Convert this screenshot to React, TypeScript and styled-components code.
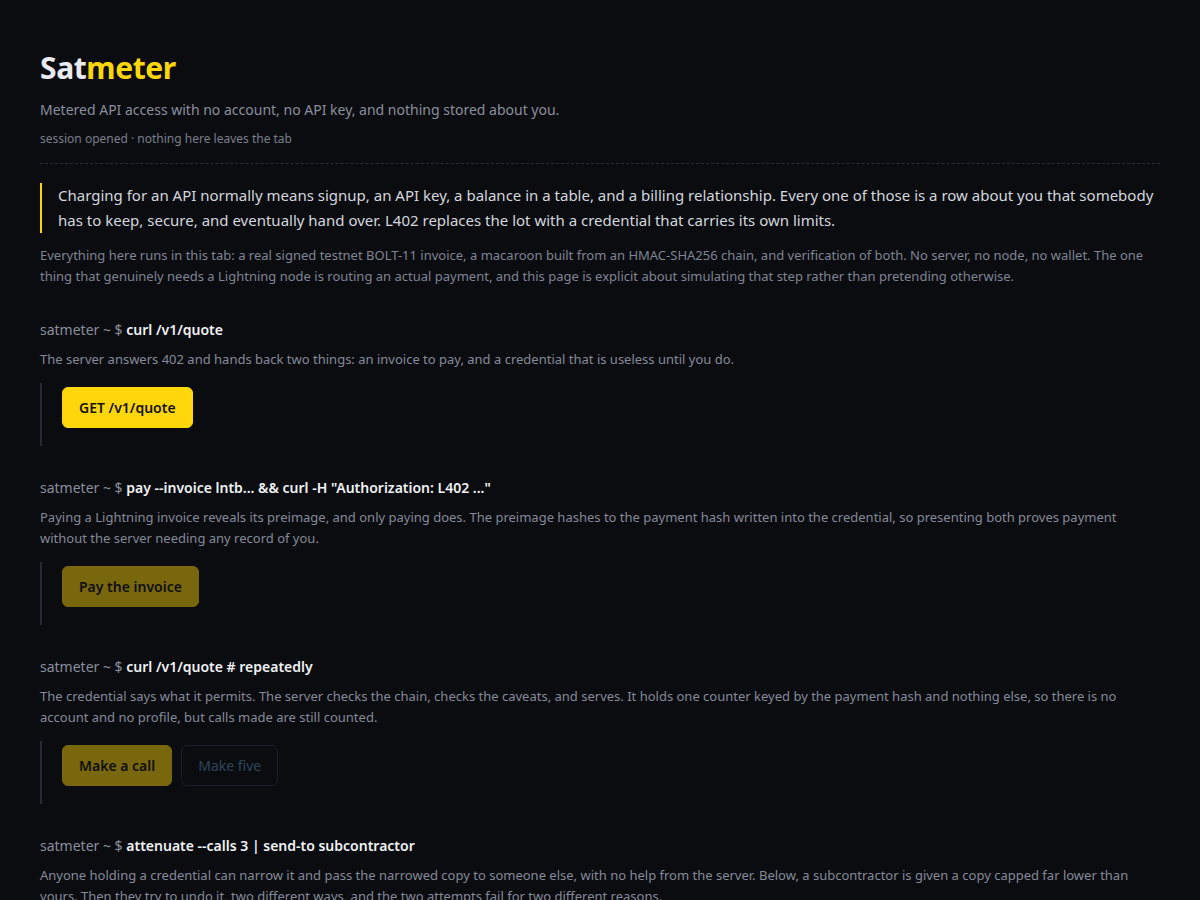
import React, { FC } from 'react'
import styled, { createGlobalStyle } from 'styled-components'

const Global = createGlobalStyle`
  html, body {
    margin: 0;
    padding: 0;
    background: #0b0c10;
  }
  body {
    font-family: "Noto Sans", "DejaVu Sans", sans-serif;
    color: #d4d7de;
  }
`

const Page = styled.main`
  padding: 48px 40px 40px;
  max-width: 1120px;
`

const Header = styled.header`
  padding-bottom: 15px;
  border-bottom: 1px dashed #2a2e38;
  margin-bottom: 19px;
`

const Title = styled.h1`
  margin: 0;
  font-size: 30px;
  line-height: 40px;
  font-weight: 700;
  letter-spacing: -0.4px;
  color: #e8eaf0;
`

const Accent = styled.span`
  color: #ffd60a;
`

const Tagline = styled.p`
  margin: 11px 0 0;
  font-size: 14px;
  line-height: 22px;
  color: #8a8f9c;
`

const Meta = styled.p`
  margin: 9px 0 0;
  font-size: 12px;
  line-height: 18px;
  color: #7a7f8b;
`

const Lead = styled.p`
  margin: 0;
  padding-left: 16px;
  border-left: 2px solid #ffd60a;
  font-size: 15px;
  line-height: 25px;
  color: #d4d7de;
`

const Body = styled.p`
  margin: 12px 0 0;
  padding-bottom: 1px;
  font-size: 13px;
  line-height: 21px;
  color: #7f8493;
`

const Section = styled.section`
  margin-top: 32px;
`

const Prompt = styled.div`
  font-size: 14px;
  line-height: 20px;
  color: #8a8f9c;
`

const Command = styled.strong`
  color: #f0f2f5;
  font-weight: 600;
`

const Desc = styled.p`
  margin: 9px 0 0;
  font-size: 13px;
  line-height: 21.5px;
  color: #858a98;
`

const Block = styled.div`
  margin-top: 12px;
  padding: 4px 0 18px 20px;
  border-left: 2px solid #262a33;
  display: flex;
  gap: 9px;
`

const Button = styled.button<{ $ghost?: boolean; $disabled?: boolean }>`
  font-family: inherit;
  font-size: 14px;
  height: 41px;
  padding: 0 16px;
  border-radius: 6px;
  cursor: pointer;
  border: 1px solid ${p => (p.$ghost ? '#1a1e26' : '#ffd60a')};
  background: ${p => (p.$ghost ? 'transparent' : '#ffd60a')};
  color: ${p => (p.$ghost ? '#2c4659' : '#15130a')};
  font-weight: ${p => (p.$ghost ? 400 : 600)};
  opacity: ${p => (p.$disabled && !p.$ghost ? 0.45 : 1)};
`

interface Step {
  cmd: string
  desc: string
  buttons: { label: string; ghost?: boolean; disabled?: boolean }[]
}

const steps: Step[] = [
  {
    cmd: 'curl /v1/quote',
    desc: 'The server answers 402 and hands back two things: an invoice to pay, and a credential that is useless until you do.',
    buttons: [{ label: 'GET /v1/quote' }],
  },
  {
    cmd: 'pay --invoice lntb... && curl -H "Authorization: L402 ..."',
    desc: 'Paying a Lightning invoice reveals its preimage, and only paying does. The preimage hashes to the payment hash written into the credential, so presenting both proves payment without the server needing any record of you.',
    buttons: [{ label: 'Pay the invoice', disabled: true }],
  },
  {
    cmd: 'curl /v1/quote # repeatedly',
    desc: 'The credential says what it permits. The server checks the chain, checks the caveats, and serves. It holds one counter keyed by the payment hash and nothing else, so there is no account and no profile, but calls made are still counted.',
    buttons: [
      { label: 'Make a call', disabled: true },
      { label: 'Make five', ghost: true, disabled: true },
    ],
  },
  {
    cmd: 'attenuate --calls 3 | send-to subcontractor',
    desc: 'Anyone holding a credential can narrow it and pass the narrowed copy to someone else, with no help from the server. Below, a subcontractor is given a copy capped far lower than yours. Then they try to undo it, two different ways, and the two attempts fail for two different reasons.',
    buttons: [{ label: 'Attenuate', disabled: true }],
  },
]

const App: FC = () => {
  return (
    <>
      <Global />
      <Page>
        <Header>
          <Title>
            Sat<Accent>meter</Accent>
          </Title>
          <Tagline>Metered API access with no account, no API key, and nothing stored about you.</Tagline>
          <Meta>session opened · nothing here leaves the tab</Meta>
        </Header>

        <Lead>
          Charging for an API normally means signup, an API key, a balance in a table, and a billing relationship.
          Every one of those is a row about you that somebody has to keep, secure, and eventually hand over. L402
          replaces the lot with a credential that carries its own limits.
        </Lead>
        <Body>
          Everything here runs in this tab: a real signed testnet BOLT-11 invoice, a macaroon built from an
          HMAC-SHA256 chain, and verification of both. No server, no node, no wallet. The one thing that genuinely
          needs a Lightning node is routing an actual payment, and this page is explicit about simulating that step
          rather than pretending otherwise.
        </Body>

        {steps.map(step => (
          <Section key={step.cmd}>
            <Prompt>
              satmeter ~ $ <Command>{step.cmd}</Command>
            </Prompt>
            <Desc>{step.desc}</Desc>
            <Block>
              {step.buttons.map(b => (
                <Button key={b.label} $ghost={b.ghost} $disabled={b.disabled}>
                  {b.label}
                </Button>
              ))}
            </Block>
          </Section>
        ))}
      </Page>
    </>
  )
}

export default App
